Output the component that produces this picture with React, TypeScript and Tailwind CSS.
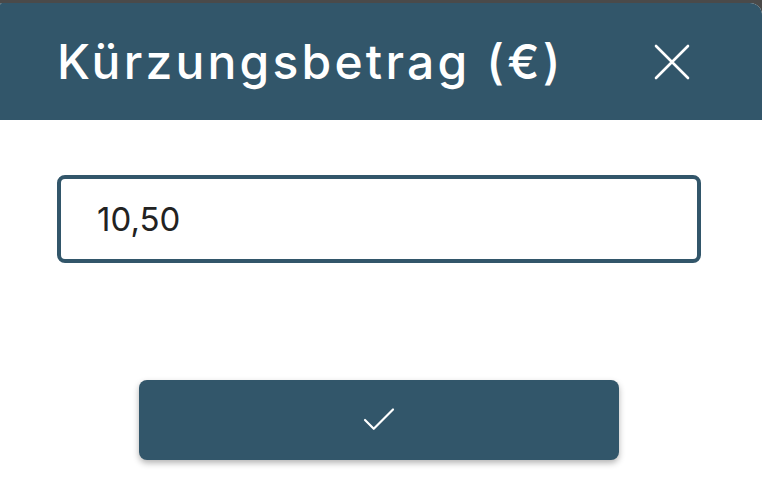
import React from 'react';

export default function App() {
    return (
        <div className="w-[762px] h-[481px] bg-[#4a4a4a] pt-[3px] overflow-hidden">
            <div className="h-full bg-white rounded-tr-[12px] rounded-tl-[2px] overflow-hidden flex flex-col">
                <div className="h-[117px] shrink-0 bg-[#32566a] flex items-center justify-between pl-[57px] pr-[72px]">
                    <h1 className="text-white text-[48px] font-medium tracking-[3.2px] font-['Inter',sans-serif] leading-none">
                        Kürzungsbetrag (€)
                    </h1>
                    <button className="w-[36px] h-[36px] flex items-center justify-center mt-[1px]">
                        <svg width="36" height="36" viewBox="0 0 36 36" fill="none" stroke="white" strokeWidth="2.6" strokeLinecap="round">
                            <path d="M2 2 34 34M34 2 2 34" />
                        </svg>
                    </button>
                </div>

                <div className="flex-1 flex flex-col px-[57px] pt-[55px]">
                    <div className="h-[88px] w-[644px] border-4 border-[#32566a] rounded-[8px] flex items-center pl-[36px]">
                        <span className="text-[#222] text-[33px] font-['Inter',sans-serif] leading-none">10,50</span>
                    </div>

                    <button className="mt-[117px] ml-[82px] w-[480px] h-[80px] bg-[#32566a] rounded-[8px] shadow-[0_3px_6px_rgba(0,0,0,0.3)] flex items-center justify-center">
                        <svg width="42" height="42" viewBox="0 0 24 24" fill="none" stroke="white" strokeWidth="1.25" strokeLinecap="round" strokeLinejoin="round">
                            <path d="M20 6 9 17l-5-5" />
                        </svg>
                    </button>
                </div>
            </div>
        </div>
    );
}
